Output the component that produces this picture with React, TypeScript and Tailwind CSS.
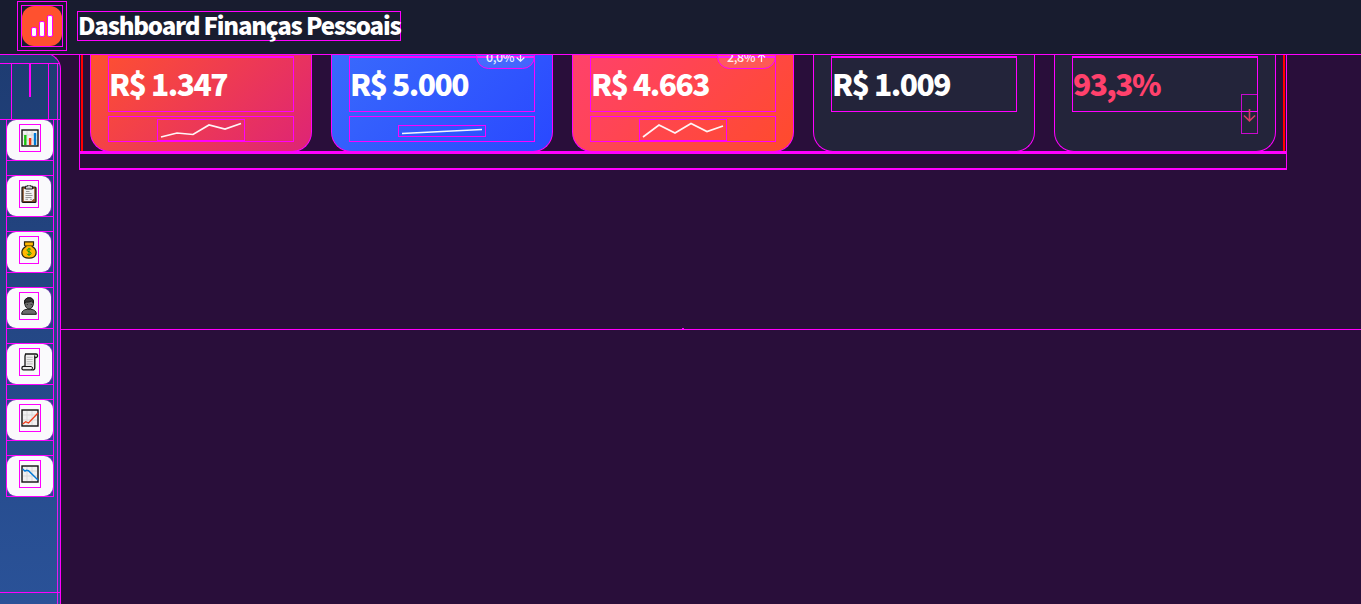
import React from 'react';

const Chart = ({ children }: { children: React.ReactNode }) => (
  <svg width="18" height="18" viewBox="0 0 18 18" fill="none">
    <rect x="1" y="1" width="16" height="16" fill="#f1f1f1" stroke="#111" strokeWidth="1.4" />
    <path d="M6 2v14M11 2v14M2 6h14M2 11h14" stroke="#d4d4d4" strokeWidth=".8" />
    {children}
  </svg>
);

const icons = {
  bars: (
    <Chart>
      <path d="M4.3 16V6" stroke="#16c60c" strokeWidth="2.4" />
      <path d="M9.1 16V9" stroke="#f03a17" strokeWidth="2.4" />
      <path d="M14 16V4" stroke="#0078d7" strokeWidth="2.4" />
    </Chart>
  ),
  clip: (
    <svg width="18" height="18" viewBox="0 0 18 18" fill="none">
      <rect x="2" y="2" width="14" height="15.4" rx="1" fill="#8e562e" stroke="#161616" strokeWidth="1.2" />
      <path d="M3.8 4h10.4v9.2L11.5 16H3.800z" fill="#f2f2f2" />
      <path d="M5.500 1.200h2a1.500 1.500 0 0 1 3 0h2V4h-7z" fill="#ccc" stroke="#222" />
      <path d="M6 6.500h3.500M5.500 8.500h6M5.500 10.500h7M5.500 12.500h6M5.500 14.300h2.500M10 14.300h2" stroke="#999" />
    </svg>
  ),
  money: (
    <svg width="18" height="18" viewBox="0 0 18 18" fill="none">
      <path d="M4.500.8h9v3.400l-1.300 1.200c2.700 1.600 4.100 4 3.900 6.500-.2 3.300-2.500 5.300-7.100 5.300s-6.900-2-7.100-5.300c-.2-2.500 1.200-4.900 3.900-6.500L4.500 4.200z" fill="#ffb900" stroke="#2b2410" strokeWidth="1.200" />
      <path d="M5 4.700h8" stroke="#7d5900" />
      <path d="M11.200 8.700c-.5-.7-1.200-.9-2.200-.9-1.200 0-1.900.5-1.900 1.400 0 2 4 1.100 4 3.200 0 .9-.9 1.400-2.100 1.400-1 0-1.700-.3-2.200-1M9 6.800v8.100" stroke="#0d9d0d" />
    </svg>
  ),
  person: (
    <svg width="18" height="18" viewBox="0 0 18 18" fill="#6b6b6b" stroke="#171717">
      <path d="M1.700 17.300c0-3.600 2.600-5.100 7.300-5.100s7.300 1.500 7.300 5.100z" />
      <path d="M4.600 4.800C4.600 2.200 6.500.8 9.300.8s4.300 1.700 4.200 4.400c0 3.700-1.800 6.700-4.400 6.700S4.600 9 4.600 4.800z" />
      <path d="M4.500 6.500C4.200 2.800 6 .8 9.300.8c2.900 0 4.500 2 4.200 5.200L11.300 4C9.500 5.300 7 5.200 5.700 5z" fill="#383838" />
      <path d="M7.300 7v1M11.200 7v1" strokeWidth=".8" />
    </svg>
  ),
  scroll: (
    <svg width="18" height="18" viewBox="0 0 18 18" fill="none" stroke="#151515">
      <path d="M4.600 1h10.500c1.900 0 2 3.500 0 3.500h-1.300v9.900c0 1.700-.8 2.500-2.200 2.500H2.400c-2 0-2-3.500 0-3.500H4V3z" fill="#eee" strokeWidth="1.300" />
      <path d="M13.700 4.500V2.300M2 13.500h8.200c1.800 0 1.600 3.200 0 3.200" />
      <path d="M5.700 4.300h6M5.700 6.500h6M5.700 8.700h6M5.700 10.900h6" stroke="#b8b8b8" strokeWidth=".9" />
    </svg>
  ),
  up: <Chart><path d="m1.700 15 3-2.300L7.500 14 17 4" stroke="#f03a17" strokeWidth="1.300" /></Chart>,
  down: <Chart><path d="m1.700 4 2.300 2.200 1.500-1 2 .5L17 15" stroke="#0078d7" strokeWidth="1.400" /></Chart>,
};

const nav = [
  { icon: icons.bars, button: 'w-[46px]', box: 'w-[22px]' },
  { icon: icons.clip, button: 'w-[44px]', box: 'w-[20px]' },
  { icon: icons.money, button: 'w-[44px]', box: 'w-[20px]' },
  { icon: icons.person, button: 'w-[44px]', box: 'w-[20px]' },
  { icon: icons.scroll, button: 'w-[45px]', box: 'w-[21px]' },
  { icon: icons.up, button: 'w-[46px]', box: 'w-[22px]' },
  { icon: icons.down, button: 'w-[46px]', box: 'w-[22px]' },
];

const cards = [
  { value: 'R$ 1.347', tone: 'bg-[linear-gradient(135deg,#ff512f_0%,#dd2476_100%)]', line: '4,18 20,14 36,15.500 52,6 68,10 84,4.500', chart: 'h-[22px]' },
  { value: 'R$ 5.000', tone: 'bg-[linear-gradient(135deg,#396afc_0%,#2948ff_100%)]', line: '4,7.500 84,3.500', badge: '0,0%', arrow: 'down', chart: 'h-[12px]' },
  { value: 'R$ 4.663', tone: 'bg-[linear-gradient(135deg,#ff416c_0%,#ff4b2b_100%)]', line: '4,18 20,6 36,14 52,4.500 68,12.500 84,7', badge: '2,8%', arrow: 'up', chart: 'h-[22px]' },
  { value: 'R$ 1.009', tone: 'bg-[#23243a]' },
  { value: '93,3%', tone: 'bg-[#23243a]', danger: true },
];

function Arrow({ up, size }: { up?: boolean; size: number }) {
  return (
    <svg width={size} height={size} viewBox="0 0 14 14" fill="none" stroke="currentColor" strokeWidth={size > 10 ? 1.7 : 2}>
      {up ? <path d="M7 14V1.500M1.500 7 7 1.500 12.500 7" /> : <path d="M7 0v12.500M1 7l6 5.700L13 7" />}
    </svg>
  );
}

function Card({ card }: { card: (typeof cards)[number] }) {
  return (
    <article className={`relative h-[97px] w-[222px] shrink-0 rounded-b-[20px] border border-t-0 border-[#ff00ff] bg-origin-border px-[17px] pt-px ${card.tone}`}>
      <div className={`h-[56px] border border-t-2 border-[#ff00ff] text-[30px] leading-[50px] font-black whitespace-nowrap ${card.danger ? 'tracking-[-1.600px] text-[#ff416c]' : 'tracking-[-1.500px] text-white'}`}>
        {card.value}
      </div>
      {card.line && (
        <div className="mt-1 flex h-[26px] items-end justify-center border border-[#ff00ff] pr-px">
          <svg className={`${card.chart} ${card.badge === '0,0%' ? 'mb-1' : ''} w-[88px] border border-[#ff00ff]`} viewBox={card.chart === 'h-[12px]' ? '1 0 86 10' : '1 1 86 20'} fill="none">
            <polyline points={card.line} stroke="#fff" strokeOpacity=".95" strokeWidth="1.700" />
          </svg>
        </div>
      )}
      {card.badge && (
        <div className="absolute top-[-11px] right-[17px] flex h-[25px] w-[59px] items-center justify-center gap-[2px] rounded-[13px] border border-[#ff00ff] bg-white/10 pt-px text-[12.500px] leading-none font-medium tracking-[-0.400px] text-white/90">
          <span>{card.badge}</span><Arrow up={card.arrow === 'up'} size={9} />
        </div>
      )}
      {card.danger && (
        <div className="absolute top-[39px] right-[17px] flex h-10 w-[17px] items-center justify-center border border-[#ff00ff]/75 pt-[3px] text-[#d73c63]">
          <Arrow size={13} />
        </div>
      )}
    </article>
  );
}

export default function App() {
  return (
    <div className="flex h-[604px] w-[1361px] flex-col overflow-hidden bg-[#290e3a] font-['Noto_Sans_CJK_SC','Noto_Sans',sans-serif]">
      <header className="relative z-10 flex h-[55px] shrink-0 items-start border-b border-[#ff00ff] bg-[#181c2f] pl-[17px]">
        <div className="mt-px h-[50px] w-[50px] border border-[#ff00ff] p-[3px]">
          <div className="h-[42px] w-[42px] border border-[#ff00ff]">
            <div className="flex h-10 w-10 items-end gap-[2px] rounded-[12px] bg-[#ff512f] pb-[9px] pl-[9px]">
              <i className="h-[10px] w-[6px] rounded-[2px] border border-[#ff00ff] bg-white" />
              <i className="h-[16px] w-[6px] rounded-[2px] border border-[#ff00ff] bg-white" />
              <i className="h-[22px] w-[6px] rounded-[2px] border border-[#ff00ff] bg-white" />
            </div>
          </div>
        </div>
        <h1 className="mt-[11px] ml-[10px] h-[30px] w-[324px] border border-[#ff00ff] text-[24px] leading-[26px] font-black tracking-[-1.200px] whitespace-nowrap text-white">Dashboard Finanças Pessoais</h1>
      </header>
      <div className="flex min-h-0 flex-1">
        <aside className="-mt-[2px] flex w-[61px] shrink-0 flex-col rounded-tr-[16px] border-t border-r border-[#ff00ff] bg-[linear-gradient(180deg,#1e3c72_0%,#2a5298_100%)] pt-px">
          <div className="flex flex-1">
            <div className="flex w-[57px] flex-col">
              <div className="mt-2 flex h-[57px] w-[60px] shrink-0 border-y border-[#ff00ff] pl-[11px]">
                <div className="flex w-[38px] justify-center border-x border-[#ff00ff]"><i className="h-[33px] w-[2px] bg-[#ff00ff]" /></div>
              </div>
              <nav className="-mt-px ml-[6px] flex w-[48px] flex-col gap-[14px] border-x border-[#ff00ff]">
                {nav.map((item, i) => (
                  <div key={i} className="h-[42px] w-[46px] border-y border-[#ff00ff]">
                    <div className={`flex h-10 ${item.button} items-start rounded-[9px] bg-[#fafafc] pt-1 pl-3 shadow-[0_0_0_1px_#ff00ff50]`}>
                      <span className={`flex h-[28px] ${item.box} items-center justify-center border border-[#ff00ff]`}>{item.icon}</span>
                    </div>
                  </div>
                ))}
              </nav>
            </div>
            <div className="mt-2 w-px bg-[#e51af0]" />
          </div>
          <div className="h-3 border-t border-[#ff00ff]"><div className="ml-[57px] h-full w-px bg-[#e51af0]" /></div>
        </aside>
        <main className="flex-1">
          <div className="h-[275px] border-b border-[#ff00ff] pl-[18px]">
            <section className="h-[115px] w-[1208px] border-x border-b-2 border-[#ff00ff]">
              <div className="h-[99px] border-b-[3px] border-[#ff00ff] px-px">
                <div className="flex h-full gap-[19px] border-l-2 border-r-2 border-[#ff0000] pl-[7px]">
                  {cards.map(card => <Card key={card.value} card={card} />)}
                </div>
              </div>
            </section>
            <i className="mt-[158px] ml-[603px] block h-px w-[2px] bg-[#ff00ff]" />
          </div>
        </main>
      </div>
    </div>
  );
}
